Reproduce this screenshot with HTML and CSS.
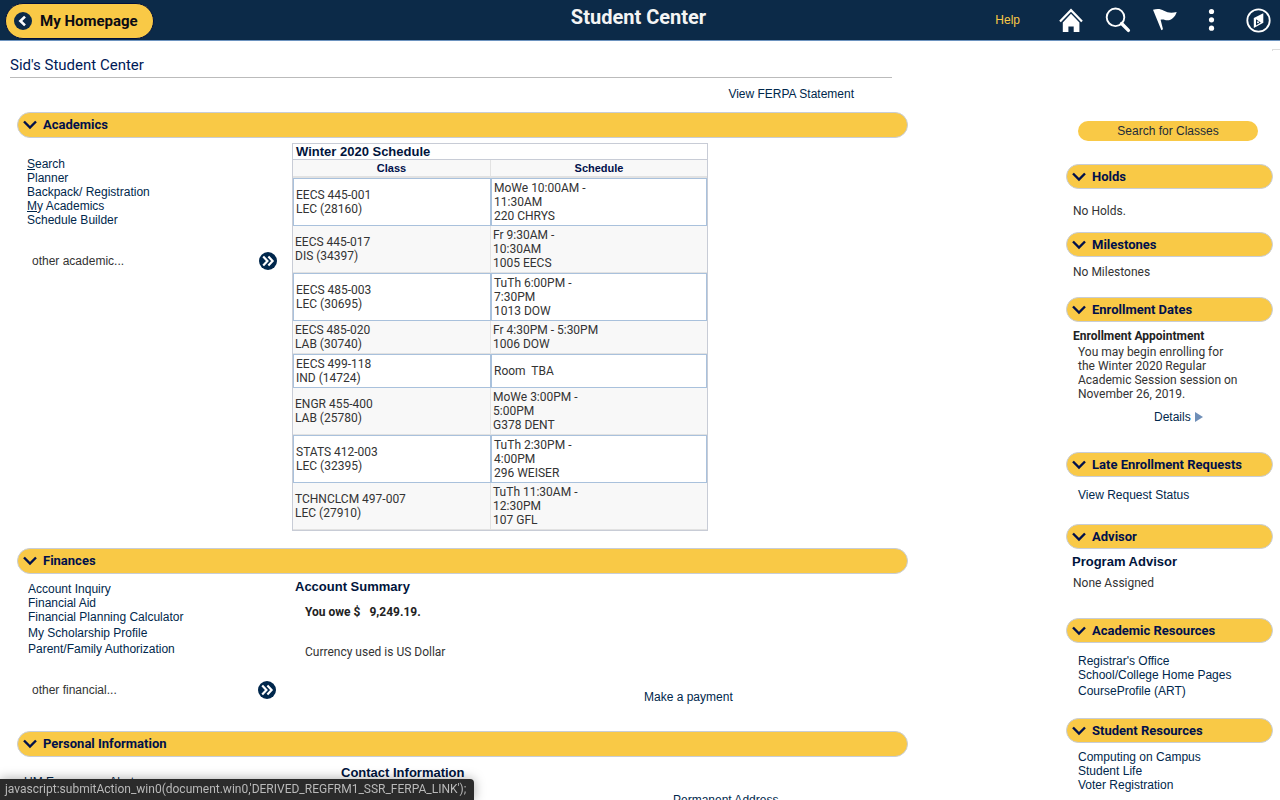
FILE: index.html
```html
<!DOCTYPE html>
<html lang="en">
<head>
<meta charset="utf-8">
<meta name="viewport" content="width=device-width, initial-scale=1">
<title>Student Center</title>
<link rel="stylesheet" href="styles.css">
</head>
<body>
<svg class="sprite" aria-hidden="true">
  <symbol id="chevron" viewBox="0 0 14 10"><path d="M1 1.5 7 7.5 13 1.5" fill="none" stroke="currentColor" stroke-width="2.4"/></symbol>
  <symbol id="go" viewBox="0 0 18 18"><circle cx="9" cy="9" r="9" fill="#00274c"/><path d="M4.2 4.5 8.4 9l-4.2 4.5M9.4 4.5 13.6 9l-4.2 4.5" fill="none" stroke="#fff" stroke-width="2.2"/></symbol>
</svg>
<header class="topbar">
  <div class="topbar-start">
    <button class="home-button" type="button">
      <svg class="back-icon" viewBox="0 0 18 18" aria-hidden="true"><circle cx="9" cy="9" r="9" fill="#0c2a48"/><path d="M11 4.6 6.4 9l4.6 4.4" fill="none" stroke="#fff" stroke-width="2.6"/></svg>
      My Homepage
    </button>
  </div>
  <h1 class="topbar-title">Student Center</h1>
  <nav class="topbar-end" aria-label="Tools">
    <a class="help" href="#help">Help</a>
    <button class="tool" type="button" aria-label="Home"><svg viewBox="0 0 26 26" aria-hidden="true"><path d="M2 14.6 13 3.2l11 11.4" fill="none" stroke="#fff" stroke-width="2.2"/><path d="M13 6.8 21.4 15.4V25h-5.7v-5.6h-5.3V25H4.8v-9.6z" fill="#fff"/></svg></button>
    <button class="tool" type="button" aria-label="Search"><svg viewBox="0 0 26 26" aria-hidden="true"><circle cx="10.5" cy="10.3" r="8.8" fill="none" stroke="#fff" stroke-width="1.9"/><path d="M16.6 16.5 23.4 23.4" stroke="#fff" stroke-width="3.4" stroke-linecap="round"/></svg></button>
    <button class="tool" type="button" aria-label="Notifications"><svg viewBox="0 0 26 26" aria-hidden="true"><path d="M1 2.8C5 1.6 8.5 1.7 12 3.8c4 2.3 8 2.3 12.7 1.2-1.5 5-5.2 8.3-9.2 8.3-2.5 0-4-1.3-6.900-.5l2.400 9.500-1.600.9z" fill="#fff"/></svg></button>
    <button class="tool" type="button" aria-label="Actions"><svg viewBox="0 0 26 26" aria-hidden="true"><g fill="#fff"><circle cx="12.500" cy="4.500" r="2.600"/><circle cx="12.500" cy="12.800" r="2.600"/><circle cx="12.500" cy="21.200" r="2.600"/></g></svg></button>
    <button class="tool" type="button" aria-label="NavBar"><svg viewBox="0 0 26 26" aria-hidden="true"><circle cx="12.500" cy="13.500" r="11.200" fill="none" stroke="#fff" stroke-width="1.800"/><path d="M7.800 11 17.300 6.200v9.600L7.800 21z" fill="#fff"/><path d="M10 12.200 14.800 15.600 10 18.400z" fill="#0c2a48"/><circle cx="12" cy="15.200" r="1" fill="#fff"/></svg></button>
  </nav>
</header>

<div class="page">
  <span class="frame-corner"></span>
  <main class="main">
    <h2 class="page-title">Sid's Student Center</h2>
    <p class="ferpa"><a href="#ferpa">View FERPA Statement</a></p>

    <section class="panel">
      <h3 class="panel-head"><button type="button" aria-expanded="true"><svg aria-hidden="true"><use href="#chevron"/></svg>Academics</button></h3>
      <div class="columns academics">
        <div class="menu">
          <ul class="links">
            <li><a href="#search"><u>S</u>earch</a></li>
            <li><a href="#planner">Planner</a></li>
            <li><a href="#backpack">Backpack/ Registration</a></li>
            <li><a href="#academics"><u>M</u>y Academics</a></li>
            <li><a href="#builder">Schedule Builder</a></li>
          </ul>
          <div class="more">
            <select aria-label="Other academic links"><option>other academic...</option></select>
            <button type="button" aria-label="Go"><svg aria-hidden="true"><use href="#go"/></svg></button>
          </div>
        </div>
        <table class="schedule">
          <caption>Winter 2020 Schedule</caption>
          <thead><tr><th class="col-class" scope="col">Class</th><th scope="col">Schedule</th></tr></thead>
          <tbody>
            <tr><td>EECS 445-001<br>LEC (28160)</td><td>MoWe 10:00AM -<br>11:30AM<br>220 CHRYS</td></tr>
            <tr><td>EECS 445-017<br>DIS (34397)</td><td>Fr 9:30AM -<br>10:30AM<br>1005 EECS</td></tr>
            <tr><td>EECS 485-003<br>LEC (30695)</td><td>TuTh 6:00PM -<br>7:30PM<br>1013 DOW</td></tr>
            <tr><td>EECS 485-020<br>LAB (30740)</td><td>Fr 4:30PM - 5:30PM<br>1006 DOW</td></tr>
            <tr><td>EECS 499-118<br>IND (14724)</td><td>Room&nbsp; TBA</td></tr>
            <tr><td>ENGR 455-400<br>LAB (25780)</td><td>MoWe 3:00PM -<br>5:00PM<br>G378 DENT</td></tr>
            <tr><td>STATS 412-003<br>LEC (32395)</td><td>TuTh 2:30PM -<br>4:00PM<br>296 WEISER</td></tr>
            <tr><td>TCHNCLCM 497-007<br>LEC (27910)</td><td>TuTh 11:30AM -<br>12:30PM<br>107 GFL</td></tr>
          </tbody>
        </table>
      </div>
    </section>

    <section class="panel">
      <h3 class="panel-head"><button type="button" aria-expanded="true"><svg aria-hidden="true"><use href="#chevron"/></svg>Finances</button></h3>
      <div class="columns finances">
        <div class="menu">
          <ul class="links">
            <li><a href="#inquiry">Account Inquiry</a></li>
            <li><a href="#aid">Financial Aid</a></li>
            <li><a href="#calculator">Financial Planning Calculator</a></li>
            <li class="loose"><a href="#scholarship">My Scholarship Profile</a></li>
            <li class="loose"><a href="#authorization">Parent/Family Authorization</a></li>
          </ul>
          <div class="more">
            <select aria-label="Other financial links"><option>other financial...</option></select>
            <button type="button" aria-label="Go"><svg aria-hidden="true"><use href="#go"/></svg></button>
          </div>
        </div>
        <div class="summary">
          <h4 class="subhead">Account Summary</h4>
          <p class="owe">You owe $ &nbsp; 9,249.19.</p>
          <p class="currency">Currency used is US Dollar</p>
          <p class="pay"><a href="#pay">Make a payment</a></p>
        </div>
      </div>
    </section>

    <section class="panel">
      <h3 class="panel-head"><button type="button" aria-expanded="true"><svg aria-hidden="true"><use href="#chevron"/></svg>Personal Information</button></h3>
      <div class="columns personal">
        <ul class="links"><li><a href="#alert">UM Emergency Alert</a></li></ul>
        <div class="contact">
          <h4 class="subhead">Contact Information</h4>
          <p class="address"><a href="#address">Permanent Address</a></p>
        </div>
      </div>
    </section>
  </main>

  <aside class="side">
    <button class="search-classes" type="button">Search for Classes</button>
    <section class="panel holds">
      <h3 class="panel-head"><button type="button" aria-expanded="true"><svg aria-hidden="true"><use href="#chevron"/></svg>Holds</button></h3>
      <p class="note">No Holds.</p>
    </section>
    <section class="panel milestones">
      <h3 class="panel-head"><button type="button" aria-expanded="true"><svg aria-hidden="true"><use href="#chevron"/></svg>Milestones</button></h3>
      <p class="note">No Milestones</p>
    </section>
    <section class="panel dates">
      <h3 class="panel-head"><button type="button" aria-expanded="true"><svg aria-hidden="true"><use href="#chevron"/></svg>Enrollment Dates</button></h3>
      <h4 class="note strong">Enrollment Appointment</h4>
      <p class="appointment">You may begin enrolling for the Winter 2020 Regular Academic Session session on November 26, 2019.</p>
      <p class="details"><a href="#details">Details<svg viewBox="0 0 8 10" aria-hidden="true"><path d="M0 0 8 5 0 10z" fill="#6f8fb8"/></svg></a></p>
    </section>
    <section class="panel late">
      <h3 class="panel-head"><button type="button" aria-expanded="true"><svg aria-hidden="true"><use href="#chevron"/></svg>Late Enrollment Requests</button></h3>
      <ul class="links"><li><a href="#requests">View Request Status</a></li></ul>
    </section>
    <section class="panel advisor">
      <h3 class="panel-head"><button type="button" aria-expanded="true"><svg aria-hidden="true"><use href="#chevron"/></svg>Advisor</button></h3>
      <h4 class="subhead">Program Advisor</h4>
      <p class="note">None Assigned</p>
    </section>
    <section class="panel resources">
      <h3 class="panel-head"><button type="button" aria-expanded="true"><svg aria-hidden="true"><use href="#chevron"/></svg>Academic Resources</button></h3>
      <ul class="links">
        <li><a href="#registrar">Registrar's Office</a></li>
        <li><a href="#schools">School/College Home Pages</a></li>
        <li class="loose"><a href="#art">CourseProfile (ART)</a></li>
      </ul>
    </section>
    <section class="panel student">
      <h3 class="panel-head"><button type="button" aria-expanded="true"><svg aria-hidden="true"><use href="#chevron"/></svg>Student Resources</button></h3>
      <ul class="links">
        <li><a href="#computing">Computing on Campus</a></li>
        <li><a href="#life">Student Life</a></li>
        <li><a href="#voter">Voter Registration</a></li>
      </ul>
    </section>
  </aside>
</div>
<div class="status">javascript:submitAction_win0(document.win0,'DERIVED_REGFRM1_SSR_FERPA_LINK');</div>
</body>
</html>
```
FILE: styles.css
```css
* { box-sizing: border-box; }

body {
  margin: 0;
  height: 100vh;
  display: flex;
  flex-direction: column;
  background: #fff;
  color: #333;
  font: 12px/14px Roboto, sans-serif;
}

h1, h2, h3, h4, p, ul { margin: 0; padding: 0; }
ul { list-style: none; }
button { padding: 0; border: 0; background: none; cursor: pointer; }
svg { display: block; }
.sprite { position: absolute; width: 0; height: 0; }

a {
  color: #00274c;
  font-family: "Liberation Sans", Arial, sans-serif;
  text-decoration: none;
}

/* Top bar */
.topbar {
  flex: none;
  display: grid;
  grid-template-columns: 1fr auto 1fr;
  align-items: center;
  height: 41px;
  padding: 0 8px 0 5px;
  background: #0c2a48;
  border-bottom: 1px solid #6d93bf;
}
.home-button {
  display: flex;
  align-items: center;
  gap: 8px;
  height: 36px;
  margin-top: 1px;
  padding: 0 15px 0 8px;
  border: 1px solid #00103c;
  border-radius: 18px;
  background: #f9c946;
  color: #0b0b14;
  font: bold 15px/20px Roboto, sans-serif;
}
.back-icon { width: 18px; height: 18px; }
.topbar-title {
  padding-bottom: 6px;
  color: #f4f4f4;
  font: bold 20px/24px Roboto, sans-serif;
}
.topbar-end {
  display: flex;
  align-items: center;
  justify-content: flex-end;
  gap: 21px;
}
.help { margin-right: 17px; color: #f9c946; }
.tool { width: 26px; height: 26px; }
.tool svg { width: 26px; height: 26px; }

/* Page columns */
.page {
  position: relative;
  flex: 1;
  min-height: 0;
  overflow: hidden;
  display: grid;
  grid-template-columns: minmax(0, 1fr) 207px;
  gap: 158px;
  padding: 0 7px 0 17px;
}
.frame-corner {
  position: absolute;
  top: 8px;
  right: 0;
  width: 8px;
  height: 2px;
  border-top: 1px solid #ddd;
  border-left: 1px solid #ddd;
}
.page-title {
  margin: 0 16px 0 -7px;
  padding: 14px 0 2px;
  border-bottom: 1px solid #bbb;
  color: #001a57;
  font: 15px/20px Roboto, sans-serif;
}
.ferpa { padding: 9px 54px 11px 0; text-align: right; }

/* Panels */
.panel-head button {
  display: flex;
  align-items: center;
  gap: 6px;
  width: 100%;
  height: 26px;
  padding: 0 5px;
  border: 1px solid #c8cdd6;
  border-radius: 13px;
  background: #f9c946;
  color: #00104b;
  font: bold 13px/16px Roboto, sans-serif;
  text-align: left;
}
.panel-head svg { width: 14px; height: 10px; }
.columns { display: grid; grid-template-columns: 275px minmax(0, 1fr); }
.loose { padding-top: 2px; }
.subhead {
  color: #00143c;
  font: bold 13px/16px "Liberation Sans", Arial, sans-serif;
}
.menu { padding: 19px 15px 0 10px; }
.more {
  display: flex;
  align-items: center;
  justify-content: space-between;
  margin-top: 25px;
}
.more select {
  appearance: none;
  width: 180px;
  height: 18px;
  padding: 0 5px;
  border: 0;
  background: none;
  color: #333;
  font: 12px/18px "Liberation Sans", Arial, sans-serif;
}
.more svg { width: 18px; height: 18px; }

/* Academics */
.academics { padding-bottom: 17px; }
.schedule {
  width: 416px;
  margin-top: 5px;
  border: 1px solid #c8ccd6;
  border-collapse: separate;
  border-spacing: 0;
}
.schedule caption {
  padding: 0 3px;
  border: solid #c8ccd6;
  border-width: 1px 1px 0;
  color: #00143c;
  font: bold 13px/15px "Liberation Sans", Arial, sans-serif;
  text-align: left;
}
.schedule th {
  height: 18px;
  padding: 0;
  border-bottom: 2px solid #e2e2e2;
  background: #f8f8f8;
  color: #00104b;
  font: bold 11px/16px "Liberation Sans", Arial, sans-serif;
}
.schedule .col-class { width: 198px; border-right: 1px solid #e2e2e2; }
.schedule td { padding: 2px; }
.schedule tr:nth-child(odd) td { border: 1px solid #a9c1dc; }
.schedule tr:nth-child(even) td {
  border-bottom: 1px solid #e2e2e2;
  background: #f8f8f8;
}
.schedule tr:nth-child(even) td:first-child { border-right: 1px solid #e2e2e2; }

/* Finances */
.finances { padding-bottom: 27px; }
.finances .menu { padding: 8px 16px 0 11px; }
.finances select { padding: 0 4px; }
.summary { padding: 5px 0 0 3px; }
.owe, .currency { padding-left: 10px; }
.owe { margin-top: 10px; color: #222; font-weight: bold; white-space: pre-wrap; }
.currency { margin-top: 26px; }
.pay { margin-top: 31px; padding-left: 349px; }

/* Personal information */
.personal { grid-template-columns: 324px minmax(0, 1fr); padding-top: 8px; }
.personal .links { padding: 10px 0 0 7px; }
.address { margin-top: 12px; padding-left: 332px; }

/* Sidebar */
.side { padding-top: 80px; }
.search-classes {
  display: block;
  width: 180px;
  height: 20px;
  margin: 0 auto 23px 12px;
  border-radius: 10px;
  background: #f9c946;
  color: #222b3a;
  font: 12px/14px "Liberation Sans", Arial, sans-serif;
}
.side .panel-head button { height: 25px; }
.side .links { padding-left: 12px; }
.note { padding-left: 7px; }
.strong { color: #222; font-size: 12px; }
.holds { padding-bottom: 14px; }
.holds .note { padding-top: 15px; }
.milestones { padding-bottom: 18px; }
.milestones .note { padding-top: 8px; }
.dates { padding-bottom: 28px; }
.dates .note { padding-top: 7px; }
.appointment { padding: 2px 30px 0 12px; }
.details { margin-top: 9px; padding-left: 88px; }
.details a { display: inline-flex; align-items: center; gap: 4px; }
.details svg { width: 8px; height: 10px; }
.late { padding-bottom: 22px; }
.late .links { padding-top: 11px; }
.advisor { padding-bottom: 28px; }
.advisor .subhead { padding: 5px 0 0 6px; }
.advisor .note { padding-top: 6px; }
.resources { padding-bottom: 20px; }
.resources .links { padding-top: 11px; }
.student .links { padding-top: 7px; }

/* Link target preview */
.status {
  position: fixed;
  left: 0;
  bottom: 0;
  padding: 3px 8px 4px 5px;
  border-top-right-radius: 4px;
  background: #2b2b2b;
  box-shadow: 0 0 12px rgba(0, 0, 0, 0.35);
  color: #b9b9b9;
  font: 12px/14px Roboto, sans-serif;
}
```
